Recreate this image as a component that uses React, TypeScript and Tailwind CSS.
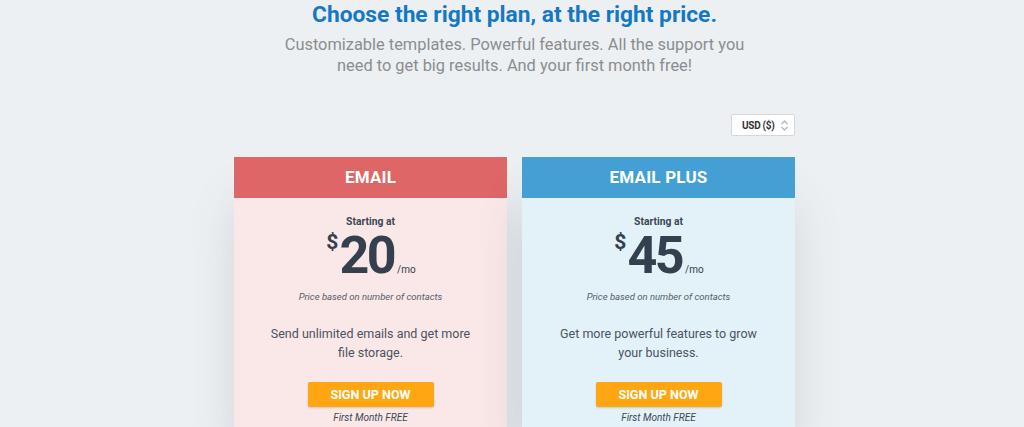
import React from "react";

function Card({
  title,
  price,
  desc,
  headerClass,
  bodyClass,
}: {
  title: string;
  price: string;
  desc: React.ReactNode;
  headerClass: string;
  bodyClass: string;
}) {
  return (
    <div className="w-[273px] shadow-[0_40px_50px_-8px_rgba(60,70,80,0.2)]">
      <div
        className={`h-[41px] flex items-center justify-center text-white font-bold text-[17px] tracking-[0.2px] ${headerClass}`}
      >
        {title}
      </div>
      <div className={`flex flex-col items-center pt-[17px] pb-[6px] ${bodyClass}`}>
        <div className="text-[10.3px] font-bold text-[#3b4654] leading-[14px]">Starting at</div>
        <div className="flex items-baseline text-[#34404e] mt-[0px] ml-[1px]">
          <span className="text-[21px] font-bold leading-[22px] self-start mt-[2px] mr-[1px]">$</span>
          <span className="text-[52px] font-bold tracking-[-2.5px] leading-[53px]">{price}</span>
          <span className="text-[10px] leading-[11px] ml-[3px]">/mo</span>
        </div>
        <div className="mt-[8px] text-[9.5px] italic text-[#555d66] leading-[13px]">
          Price based on number of contacts
        </div>
        <div className="mt-[21px] text-[12.5px] text-[#4a5360] leading-[19px] text-center">{desc}</div>
        <button className="mt-[20px] w-[126px] h-[25px] bg-[#ffa612] rounded-[2px] text-white font-bold text-[12.6px] leading-[25px] shadow-[0_1px_2px_rgba(0,0,0,0.15)]">
          SIGN UP NOW
        </button>
        <div className="mt-[4px] text-[10px] italic text-[#3f4752] leading-[13px]">First Month FREE</div>
      </div>
    </div>
  );
}

export default function App() {
  return (
    <div
      className="w-[1024px] h-[427px] overflow-hidden bg-[#edf0f3] flex flex-col items-center pl-[5px]"
      style={{ fontFamily: "Roboto, 'Liberation Sans', sans-serif" }}
    >
      <h1 className="mt-[0px] text-[22.75px] font-bold text-[#1478c6] leading-[30px]">
        Choose the right plan, at the right price.
      </h1>
      <p className="mt-[4px] text-[16.4px] text-[#8a8d90] leading-[21px] text-center w-[480px]">
        Customizable templates. Powerful features. All the support you need to get big results. And your first month free!
      </p>
      <div className="w-[561px] flex justify-end mt-[38px]">
        <div className="h-[22px] w-[64px] bg-white border border-[#d4d8dc] rounded-[2px] flex items-center justify-between pl-[10px] pr-[5px]">
          <span className="text-[10px] font-bold text-[#333] tracking-[-0.3px]">USD ($)</span>
          <svg width="9" height="13" viewBox="0 0 9 13" fill="none" stroke="#b5b9bd" strokeWidth="1.3">
            <path d="M1.5 5 L4.5 2 L7.5 5" />
            <path d="M1.5 8 L4.5 11 L7.5 8" />
          </svg>
        </div>
      </div>
      <div className="flex gap-[15px] mt-[21px]">
        <Card
          title="EMAIL"
          price="20"
          headerClass="bg-[#de6666]"
          bodyClass="bg-[#fae8e8]"
          desc={
            <>
              Send unlimited emails and get more
              <br />
              file storage.
            </>
          }
        />
        <Card
          title="EMAIL PLUS"
          price="45"
          headerClass="bg-[#439fd4]"
          bodyClass="bg-[#e3f1f9]"
          desc={
            <>
              Get more powerful features to grow
              <br />
              your business.
            </>
          }
        />
      </div>
    </div>
  );
}
